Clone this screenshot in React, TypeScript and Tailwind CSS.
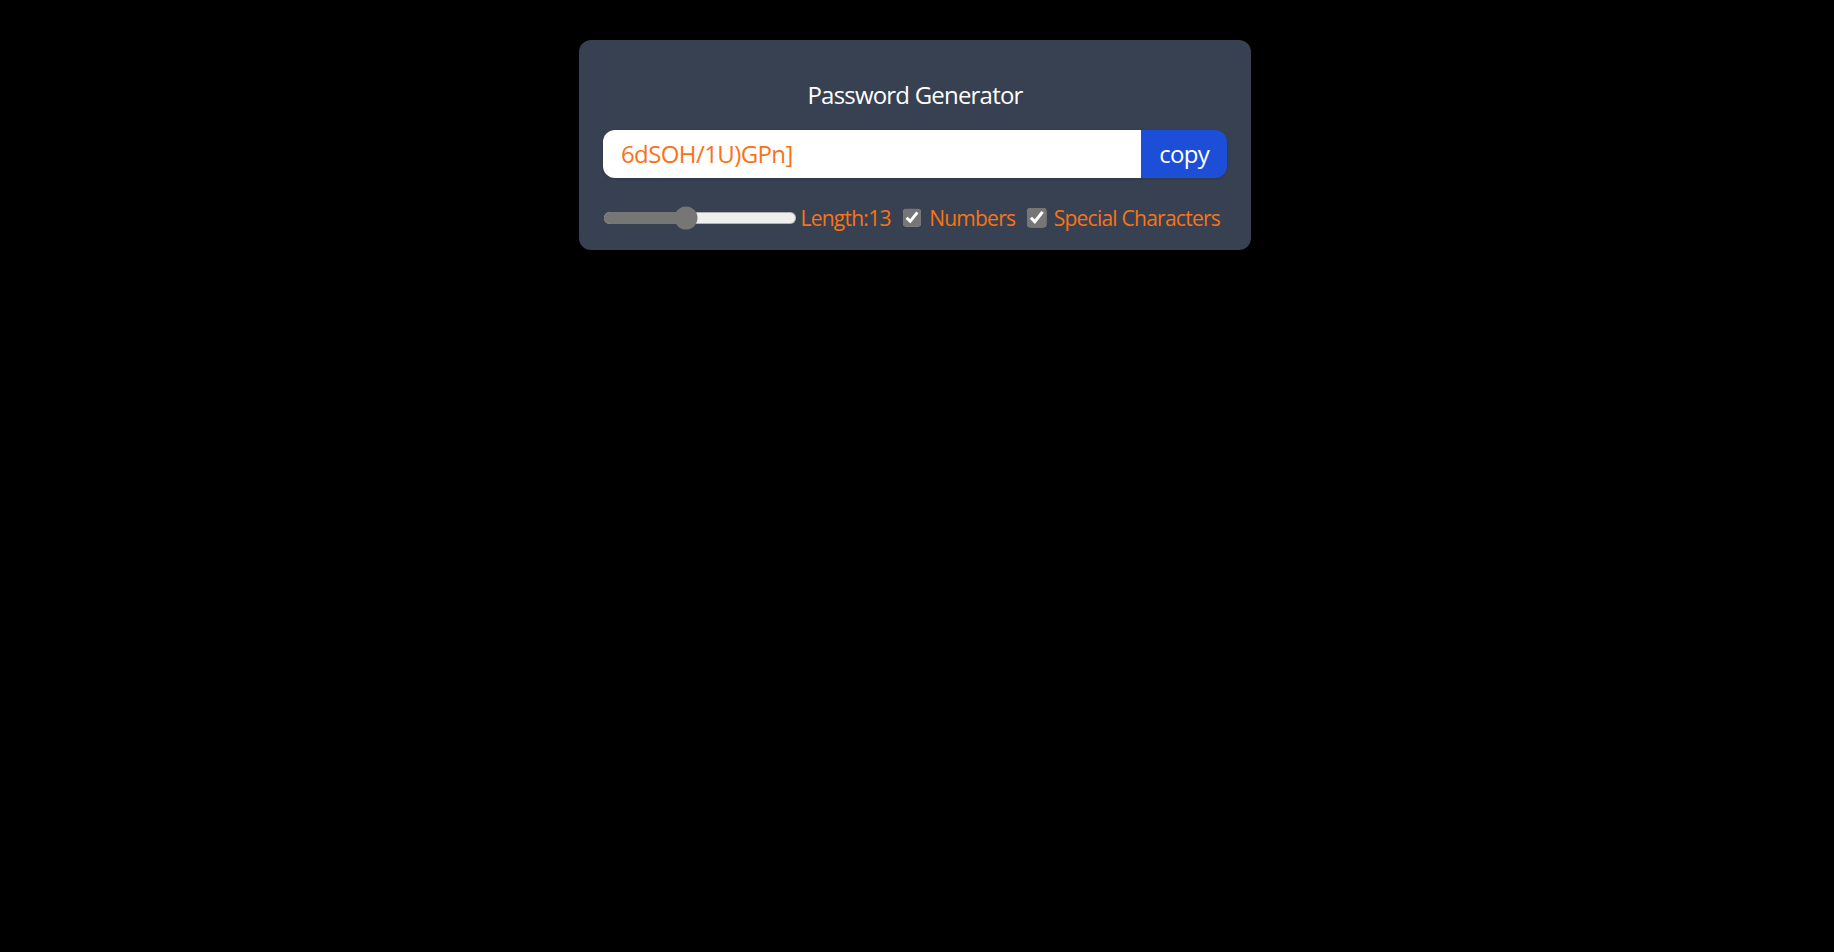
import React, { useState } from "react";

export default function App() {
  const [length, setLength] = useState(13);
  const [numbers, setNumbers] = useState(true);
  const [chars, setChars] = useState(true);
  const password = "6dSOH/1U)GPn]";

  return (
    <div className="min-h-[952px] w-full bg-black pt-[40px] pr-[4px] font-['Open_Sans',sans-serif] tracking-[-0.05em]">
      <div className="mx-auto w-[672px] rounded-[12px] bg-[#374151] px-[24px] py-[18px] text-[#f97316]">
        <h1 className="my-[18px] pt-[1px] text-center text-[24px] leading-[36px] text-white">Password Generator</h1>
        <div className="mb-[24px] -mt-[1px] flex overflow-hidden rounded-[12px] shadow">
          <input
            type="text"
            value={password}
            readOnly
            placeholder="password"
            className="w-full bg-white px-[18px] py-[6px] text-[24px] leading-[36px] tracking-[-0.025em] text-[#f97316] outline-none"
          />
          <button className="shrink-0 bg-[#1d4ed8] px-[18px] py-[3px] text-[24px] leading-[36px] tracking-[-0.03em] text-white outline-none">
            copy
          </button>
        </div>
        <div className="flex gap-x-[12px] whitespace-nowrap pt-[1px] -mb-[1px] text-[21px] leading-[30px] tracking-[-0.036em]">
          <div className="flex shrink-0 items-center gap-x-[4px]">
            <input
              type="range"
              min={8}
              max={20}
              value={length}
              onChange={(e) => setLength(Number(e.target.value))}
              className="cursor-pointer accent-[#767676] [zoom:1.5]"
            />
            <label>Length:{length}</label>
          </div>
          <div className="flex shrink-0 items-center gap-x-[7px]">
            <input
              type="checkbox"
              checked={numbers}
              onChange={() => setNumbers(!numbers)}
              className="accent-[#767676] [zoom:1.5]"
            />
            <label>Numbers</label>
          </div>
          <div className="flex shrink-0 items-center gap-x-[7px]">
            <input
              type="checkbox"
              checked={chars}
              onChange={() => setChars(!chars)}
              className="accent-[#767676] [zoom:1.5]"
            />
            <label>Special Characters</label>
          </div>
        </div>
      </div>
    </div>
  );
}
